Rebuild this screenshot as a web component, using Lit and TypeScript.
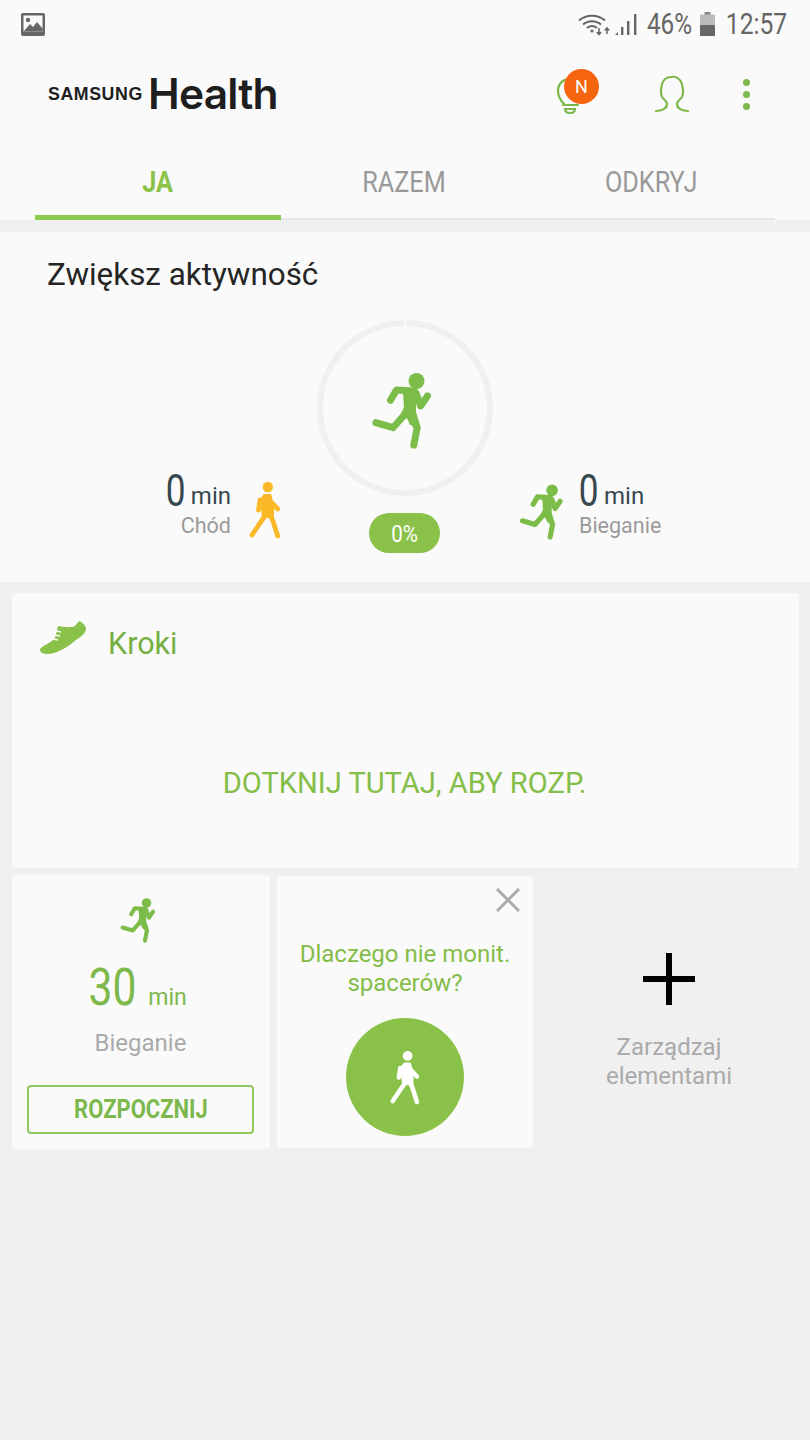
import { LitElement, html, css } from "lit";
import { customElement } from "lit/decorators.js";

const runner = (w: number, h: number, color: string, cls = "") => html`<svg class=${cls} width=${w} height=${h} viewBox="0 0 64 78" fill="none" stroke=${color} stroke-linecap="round" stroke-linejoin="round" stroke-width="7">
  <circle cx="46.5" cy="10" r="8" fill=${color} stroke="none"></circle>
  <path d="M20.500 29.300L26.500 19L44 20"></path>
  <path d="M46 22L50.600 35L57.500 25"></path>
  <path d="M27 17L46 18L46 41L50 54L40 54L37 47L26 54L34 36L33 22Z" fill=${color} stroke="none"></path>
  <path d="M5.900 51.700L23 56.700L36 42"></path>
  <path d="M38 42L47.200 56.700L43.800 74"></path>
</svg>`;

const walker = (w: number, h: number, color: string) => html`<svg width=${w} height=${h} viewBox="0 0 34 60" fill="none" stroke=${color} stroke-linecap="round" stroke-linejoin="round" stroke-width="4.800">
  <circle cx="19.800" cy="7" r="5.200" fill=${color} stroke="none"></circle>
  <path d="M12 19L16 14L23 14L26 24L26 38L14 38Z" fill=${color} stroke="none"></path>
  <path d="M10.500 30L12 20"></path>
  <path d="M29.700 29L24 23"></path>
  <path d="M4 55L12 43L17 36"></path>
  <path d="M29.700 56L25 41L22 35"></path>
</svg>`;

@customElement("app-root")
export class AppRoot extends LitElement {
  static styles = css`
    :host { display: block; min-height: 1440px; background: #f0f0f0; font-family: Roboto, "Noto Sans", sans-serif; color: #222; }
    .cond { display: inline-flex; justify-content: center; white-space: nowrap; }
    header { background: #fafafa; height: 220px; display: flex; flex-direction: column; }
    .status { height: 48px; display: flex; align-items: center; padding: 0 23px 0 21px; color: #666; box-sizing: border-box; }
    .status .right { margin-left: auto; display: flex; align-items: center; }
    .st-pct { width: 45px; margin-left: 10px; font-size: 29px; transform: scaleX(.84); }
    .st-bat { margin-left: 8px; }
    .st-time { width: 61px; margin-left: 11px; font-size: 29px; transform: scaleX(.85); }
    .brand { height: 92px; display: flex; align-items: center; padding-left: 48px; padding-right: 60px; }
    .logo { display: flex; align-items: center; color: #1e1e1e; }
    .logo .sam { font-family: "Liberation Sans", sans-serif; font-weight: 700; font-size: 18.5px; width: 100px; transform: scaleX(.96); transform-origin: left; letter-spacing: .6px; }
    .logo .hl { font-family: Inter, sans-serif; font-weight: 600; font-size: 42.5px; line-height: 46px; letter-spacing: -.8px; }
    .actions { margin-left: auto; display: flex; align-items: center; }
    .bulb { position: relative; width: 44px; height: 48px; margin-right: 55px; }
    .badge { position: absolute; left: 8px; top: -1px; width: 35px; height: 35px; border-radius: 50%; background: #f5650f; color: #fff; font-size: 18px; display: flex; align-items: center; justify-content: center; }
    .person { margin-right: 54px; display: block; }
    .dots { display: flex; flex-direction: column; gap: 5px; }
    .dots i { width: 7px; height: 7px; border-radius: 50%; background: #7cb84c; display: block; }
    .tabs { margin: 0 35px; flex: 1; display: grid; grid-template-columns: 246px 246px 248px; border-bottom: 2px solid #e6e6e6; }
    .tab { display: flex; align-items: center; justify-content: center; font-size: 29px; color: #999; padding-top: 8px; margin-bottom: -2px; box-sizing: border-box; border-bottom: 4px solid transparent; }
    .tab span { transform: scaleX(.87); white-space: nowrap; }
    .tab.on { color: #8bc34a; font-weight: 700; border-bottom: 5px solid #8bcb4e; }
    .active { margin-top: 12px; background: #fafafa; height: 350px; display: flex; flex-direction: column; box-sizing: border-box; }
    .active h2 { margin: 0; padding: 25px 0 0 47px; font-weight: 400; font-size: 31.4px; line-height: 36px; color: #252525; }
    .ring-row { display: grid; grid-template-columns: 317px 176px 317px; margin-top: 27px; }
    .stat { display: flex; align-items: flex-end; box-sizing: border-box; padding-bottom: 13px; }
    .stat.l { justify-content: flex-end; padding-right: 35px; gap: 17px; }
    .stat.r { padding-left: 25px; gap: 14px; }
    .nums { display: flex; flex-direction: column; }
    .stat.l .nums { align-items: flex-end; }
    .val { display: flex; align-items: baseline; height: 38px; line-height: 38px; color: #37474f; }
    .val b { font-weight: 400; font-size: 44px; transform: translateY(2px) scaleX(.8); display: inline-block; width: 18px; margin-left: -2px; justify-content: center; }
    .val em { font-style: normal; font-size: 24px; margin-left: 9px; }
    .lbl { font-size: 21.5px; line-height: 28px; color: #9a9a9a; margin-top: 4px; }
    .center { display: flex; flex-direction: column; align-items: center; }
    .ring { position: relative; width: 176px; height: 176px; display: flex; align-items: center; justify-content: center; }
    .ring > svg.track { position: absolute; inset: 0; }
    .ring .icon { margin: 4px 6px 0 0; position: relative; }
    .pill { margin: 17px 1px 0 0; width: 71px; height: 40px; padding-top: 2px; box-sizing: border-box; border-radius: 20px; background: #8ac249; color: #fff; font-size: 24px; display: flex; align-items: center; justify-content: center; }
    .pill span { transform: scaleX(.86); display: inline-block; }
    .card { background: #fafafa; border-radius: 4px; }
    .steps { margin: 11px 11px 0 12px; height: 275px; display: flex; flex-direction: column; box-sizing: border-box; padding: 20px 0 0 28px; }
    .steps-top { display: flex; align-items: center; gap: 22px; }
    .steps-top span { font-size: 30.5px; color: #76b043; margin-top: 13px; }
    .steps-cta { margin: 104px 0 0 -30px; text-align: center; font-size: 29.1px; line-height: 36px; color: #84bd47; }
    .row { display: grid; grid-template-columns: 258px 256px 258px; gap: 7px; padding: 7px 0 0 12px; align-items: start; }
    .goal { height: 274px; display: flex; flex-direction: column; align-items: center; padding: 22px 1px 0 0; box-sizing: border-box; }
    .goal .icon { margin-right: 5px; }
    .goal .num { display: flex; align-items: baseline; margin: 14px 10px 0 0; height: 56px; color: #7cb84c; }
    .goal .num b { font-weight: 400; font-size: 52px; transform: scaleX(.82); display: inline-block; width: 50px; }
    .goal .num em { font-style: normal; font-size: 23px; margin-left: 14px; }
    .goal .name { margin-top: 15px; font-size: 24px; line-height: 30px; color: #aaa; }
    .btn { margin-top: 27px; width: 227px; height: 49px; box-sizing: border-box; border: 2.5px solid #92c663; border-radius: 4px; display: flex; align-items: center; justify-content: center; color: #7cb84c; font-size: 25px; font-weight: 700; }
    .btn span { transform: scaleX(.88); display: inline-block; white-space: nowrap; }
    .tip { margin-top: 1px; height: 272px; position: relative; display: flex; flex-direction: column; align-items: center; padding-top: 64px; box-sizing: border-box; }
    .close { position: absolute; right: 13px; top: 12px; }
    .tip p { margin: 0; text-align: center; font-size: 24px; line-height: 29px; color: #84bd47; }
    .circle { margin-top: 20px; width: 118px; height: 118px; border-radius: 50%; background: #8ac249; display: flex; align-items: center; justify-content: center; }
    .manage { height: 272px; display: flex; flex-direction: column; align-items: center; padding-top: 78px; box-sizing: border-box; }
    .manage p { margin: 28px 0 0; text-align: center; font-size: 24px; line-height: 29px; color: #aaa; }
  `;

  render() {
    return html`
      <header>
        <div class="status">
          <svg width="24" height="23" viewBox="0 0 24 23"><rect width="24" height="23" rx="2" fill="#666"></rect><rect x="2.5" y="2.5" width="19" height="16" fill="#fafafa"></rect><circle cx="7" cy="7" r="2.2" fill="#666"></circle><path d="M2.5 18.5L9 11l3 3 4-5 5.5 6.5v3z" fill="#666"></path></svg>
          <div class="right">
            <svg width="34" height="23" viewBox="0 0 34 23" fill="none" stroke="#666" stroke-width="2"><path d="M1 7.5C8 1 20 1 27 7.5"></path><path d="M5 11.5C10 7 18 7 23 11.5"></path><path d="M9 15C12 12.5 16 12.5 19 15"></path><circle cx="14" cy="18" r="1.6" fill="#666" stroke="none"></circle><path d="M21 15v6M18.8 19l2.2 2.5 2.2-2.5M29 21v-6M26.8 17.500l2.200-2.500 2.200 2.500" stroke-width="1.500"></path></svg>
            <svg style="margin-left:3px" width="22" height="23" viewBox="0 0 22 23" fill="#666"><path d="M0 22l3-3v3z"></path><rect x="6" y="14" width="2.4" height="8"></rect><rect x="12" y="8" width="2.400" height="14"></rect><rect x="19" y="1" width="2.400" height="21"></rect></svg>
            <span class="cond st-pct">46%</span>
            <svg class="st-bat" width="15" height="24" viewBox="0 0 15 24"><rect x="4.500" y="0" width="6" height="3" fill="#888"></rect><rect x="0" y="2.500" width="15" height="21.500" rx="1" fill="#bbb"></rect><rect x="0" y="13" width="15" height="11" rx="1" fill="#666"></rect></svg>
            <span class="cond st-time">12:57</span>
          </div>
        </div>
        <div class="brand">
          <div class="logo"><span class="sam">SAMSUNG</span><span class="hl">Health</span></div>
          <div class="actions">
            <div class="bulb">
              <svg width="30" height="42" viewBox="0 0 30 42" fill="none" stroke="#7cb84c" stroke-width="2.200" stroke-linecap="round" style="position:absolute;left:0;top:6px"><path d="M8 28C4 24 2 20 2 15C2 8 7 3 13 3"></path><path d="M7 29h15"></path><path d="M9 33c0 3 2 4 5 4s5-1 5-4z"></path></svg>
              <span class="badge">N</span>
            </div>
            <svg class="person" width="34" height="38" viewBox="0 0 34 38" fill="none" stroke="#7cb84c" stroke-width="2.200" stroke-linecap="round"><path d="M1 36C6 36 12 34 12 29C12 26 9 25 7 22C5 18 6 14 7 9C9 3 13 2 16 2C20 1 25 3 27 9C28 14 29 18 27 22C25 25 22 26 22 29C22 34 28 36 33 36"></path></svg>
            <div class="dots"><i></i><i></i><i></i></div>
          </div>
        </div>
        <div class="tabs">
          <div class="tab on"><span>JA</span></div>
          <div class="tab"><span>RAZEM</span></div>
          <div class="tab"><span>ODKRYJ</span></div>
        </div>
      </header>

      <section class="active">
        <h2>Zwiększ aktywność</h2>
        <div class="ring-row">
          <div class="stat l">
            <div class="nums">
              <div class="val"><b class="cond">0</b><em>min</em></div>
              <div class="lbl">Chód</div>
            </div>
            ${walker(34, 60, "#fbb927")}
          </div>
          <div class="center">
            <div class="ring">
              <svg class="track" width="176" height="176" viewBox="0 0 176 176" fill="none"><circle cx="88" cy="88" r="85" stroke="#f0f0f0" stroke-width="6"></circle><rect x="87" y="0" width="2" height="6" fill="#fafafa"></rect></svg>
              ${runner(64, 78, "#7cbd4a", "icon")}
            </div>
            <div class="pill"><span>0%</span></div>
          </div>
          <div class="stat r">
            ${runner(47, 57, "#7cbd4a")}
            <div class="nums">
              <div class="val"><b class="cond">0</b><em>min</em></div>
              <div class="lbl">Bieganie</div>
            </div>
          </div>
        </div>
      </section>

      <section class="card steps">
        <div class="steps-top">
          <svg width="46" height="34" viewBox="0 0 46 34"><path d="M0 29C3 25 10 24 15 18L18 6C24 7 31 8 35 6L39 1C42 2 45 5 46 8C46 13 42 16 36 20C28 27 18 33 8 34C3 34 0 33 0 29Z" fill="#8ac249"></path><path d="M13 19l5 1M15 15l5 1M16 11l5 1" stroke="#fafafa" stroke-width="1.500"></path></svg>
          <span>Kroki</span>
        </div>
        <div class="steps-cta">DOTKNIJ TUTAJ, ABY ROZP.</div>
      </section>

      <div class="row">
        <div class="card goal">
          ${runner(38, 46, "#7cbd4a", "icon")}
          <div class="num"><b class="cond">30</b><em>min</em></div>
          <div class="name">Bieganie</div>
          <div class="btn"><span>ROZPOCZNIJ</span></div>
        </div>
        <div class="card tip">
          <svg class="close" width="24" height="24" viewBox="0 0 24 24" stroke="#aaa" stroke-width="3"><path d="M1 1L23 23M23 1L1 23"></path></svg>
          <p>Dlaczego nie monit.<br />spacerów?</p>
          <div class="circle">${walker(32, 57, "#fff")}</div>
        </div>
        <div class="manage">
          <svg width="52" height="52" viewBox="0 0 52 52" stroke="#000" stroke-width="6"><path d="M26 0V52M0 26H52"></path></svg>
          <p>Zarządzaj<br />elementami</p>
        </div>
      </div>
    `;
  }
}
